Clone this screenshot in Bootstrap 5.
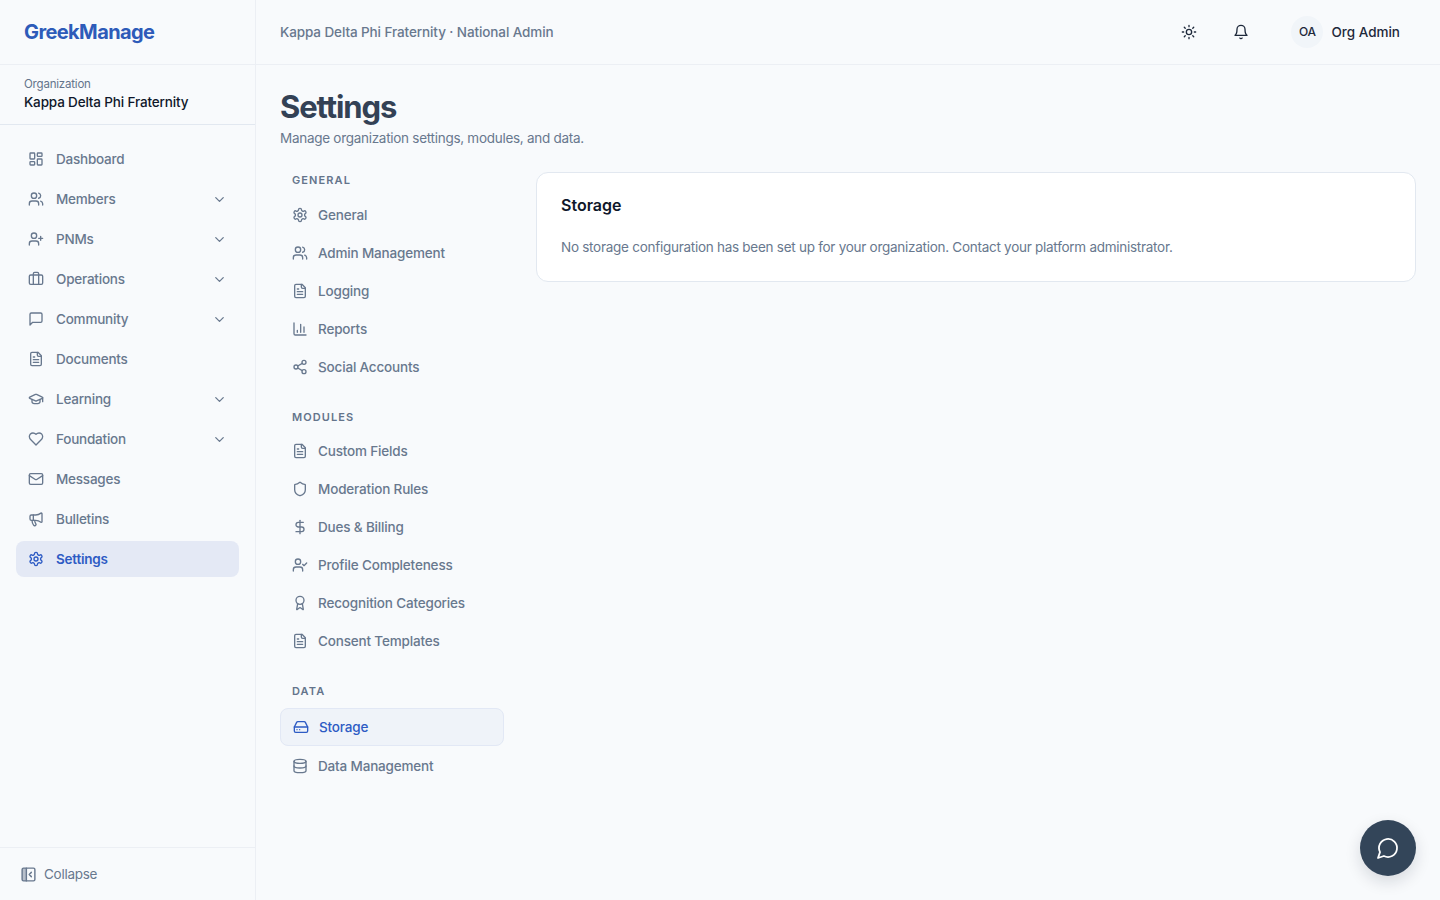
<!DOCTYPE html>
<html lang="en">
<head>
<meta charset="utf-8">
<title>Settings</title>
<link href="https://cdn.jsdelivr.net/npm/bootstrap@5.3.0/dist/css/bootstrap.min.css" rel="stylesheet">
<style>
body{font-family:"Inter","Liberation Sans",sans-serif;background:#f8fafc;color:#0f172a;font-size:13.5px;letter-spacing:-.28px;height:100vh;overflow:hidden}
svg.ico{width:16px;height:16px;fill:none;stroke:currentColor;stroke-width:2;stroke-linecap:round;stroke-linejoin:round;flex:none}
.gm-side{width:256px;height:900px;border-right:1px solid #eceff4;flex:none}
.gm-logo{height:65px;padding-left:24px;border-bottom:1px solid #eceff4;color:#2d5bb9;font-size:20px;font-weight:700;letter-spacing:-.6px}
.gm-org{height:60px;padding:12px 24px 0;border-bottom:1px solid #e2e8f0}
.gm-org-l{font-size:11.5px;line-height:15px;color:#64748b;letter-spacing:-.2px}
.gm-org-n{line-height:20px;font-weight:500;letter-spacing:-.16px}
.gm-nav{padding:16px 16px 0;gap:4px}
.gm-nav a{height:36px;padding:0 12px;gap:12px;color:#68788e;font-weight:500;text-decoration:none;border-radius:8px;letter-spacing:-.22px}
.gm-nav a .gm-chev{margin-left:auto;margin-right:.5px;width:15px;height:15px}
.gm-nav a.on{background:#e4e9f5;color:#2d5bc4;font-weight:600}
.gm-foot{border-top:1px solid #eceff4;height:53px;padding-left:20px;gap:7px;color:#68788e}
.gm-foot svg.ico{width:17px;height:17px}
.gm-top{height:65px;border-bottom:1px solid #eceff4;padding:0 40px 0 24px;color:#68788e;font-weight:500;letter-spacing:-.1px}
.gm-tool{width:52px;color:#1e293b}
.gm-ava{width:32px;height:32px;border-radius:50%;background:#f1f5f9;color:#1e293b;font-size:12px;font-weight:500;letter-spacing:-.2px}
.gm-user{color:#1e293b;gap:8px;margin-left:24px;letter-spacing:0}
.gm-main{padding:24px}
.gm-h1{font-size:31px;line-height:36px;font-weight:700;color:#334155;letter-spacing:-1.1px;margin:0}
.gm-sub{color:#68788e;line-height:20px;margin:3px 0 24px}
.gm-sn{width:224px;flex:none;margin-right:32px}
.gm-sh{font-size:11px;line-height:16px;font-weight:600;letter-spacing:1.1px;color:#64748b;padding-left:12px;margin-bottom:8px}
.gm-sh.next{margin-top:23px;margin-bottom:7px}
.gm-sh.last{margin-top:23px;margin-bottom:9px}
.gm-sn a{height:38px;padding:0 12px;gap:10px;color:#68788e;font-weight:500;text-decoration:none;border-radius:8px;letter-spacing:-.17px}
.gm-sn a.on{background:#eff3f9;border:1px solid #e2e8f5;color:#2d5bc4;margin-bottom:1px}
.gm-card{height:110px;background:#fff;border:1px solid #e2e8f0;border-radius:12px;padding:22px 24px;flex:1}
.gm-ct{font-size:16px;line-height:20px;font-weight:600;color:#0f172a;margin:0 0 22px;letter-spacing:0}
.gm-cp{color:#68788e;line-height:20px;margin:0;letter-spacing:-.27px}
.gm-chat{position:fixed;right:24px;bottom:24px;width:56px;height:56px;border-radius:50%;background:#334559;color:#fff;border:0;box-shadow:0 6px 16px rgba(15,23,42,.14)}
.gm-chat svg.ico{width:24px;height:24px;stroke-width:1.8}
</style>
</head>
<body>
<svg width="0" height="0" class="position-absolute">
<symbol id="i-dash" viewBox="0 0 24 24"><rect x="3" y="3" width="7" height="9" rx="1"/><rect x="14" y="3" width="7" height="5" rx="1"/><rect x="14" y="12" width="7" height="9" rx="1"/><rect x="3" y="16" width="7" height="5" rx="1"/></symbol>
<symbol id="i-users" viewBox="0 0 24 24"><path d="M16 21v-2a4 4 0 0 0-4-4H6a4 4 0 0 0-4 4v2"/><circle cx="9" cy="7" r="4"/><path d="M22 21v-2a4 4 0 0 0-3-3.87"/><path d="M16 3.13a4 4 0 0 1 0 7.75"/></symbol>
<symbol id="i-uplus" viewBox="0 0 24 24"><path d="M16 21v-2a4 4 0 0 0-4-4H6a4 4 0 0 0-4 4v2"/><circle cx="9" cy="7" r="4"/><path d="M19 8v6M22 11h-6"/></symbol>
<symbol id="i-brief" viewBox="0 0 24 24"><path d="M16 20V4a2 2 0 0 0-2-2h-4a2 2 0 0 0-2 2v16"/><rect x="2" y="6" width="20" height="14" rx="2"/></symbol>
<symbol id="i-msg" viewBox="0 0 24 24"><path d="M21 15a2 2 0 0 1-2 2H7l-4 4V5a2 2 0 0 1 2-2h14a2 2 0 0 1 2 2z"/></symbol>
<symbol id="i-file" viewBox="0 0 24 24"><path d="M15 2H6a2 2 0 0 0-2 2v16a2 2 0 0 0 2 2h12a2 2 0 0 0 2-2V7Z"/><path d="M14 2v4a2 2 0 0 0 2 2h4"/><path d="M10 9H8M16 13H8M16 17H8"/></symbol>
<symbol id="i-cap" viewBox="0 0 24 24"><path d="M21.42 10.922a1 1 0 0 0-.019-1.838L12.83 5.18a2 2 0 0 0-1.66 0L2.6 9.08a1 1 0 0 0 0 1.832l8.57 3.908a2 2 0 0 0 1.66 0z"/><path d="M22 10v6"/><path d="M6 12.5V16a6 3 0 0 0 12 0v-3.5"/></symbol>
<symbol id="i-heart" viewBox="0 0 24 24"><path d="M19 14c1.49-1.46 3-3.21 3-5.5A5.5 5.5 0 0 0 16.5 3c-1.76 0-3 .5-4.5 2-1.5-1.5-2.74-2-4.5-2A5.5 5.5 0 0 0 2 8.5c0 2.3 1.5 4.05 3 5.5l7 7Z"/></symbol>
<symbol id="i-mail" viewBox="0 0 24 24"><rect x="2" y="4" width="20" height="16" rx="2"/><path d="m22 7-8.97 5.7a1.94 1.94 0 0 1-2.06 0L2 7"/></symbol>
<symbol id="i-mega" viewBox="0 0 24 24"><path d="M11 6a13 13 0 0 0 8.4-2.8A1 1 0 0 1 21 4v12a1 1 0 0 1-1.6.8A13 13 0 0 0 11 14H5a2 2 0 0 1-2-2V8a2 2 0 0 1 2-2z"/><path d="M6 14a12 12 0 0 0 2.4 7.2 2 2 0 0 0 3.2-2.4A8 8 0 0 1 10 14"/><path d="M8 6v8"/></symbol>
<symbol id="i-gear" viewBox="0 0 24 24"><path d="M12.22 2h-.44a2 2 0 0 0-2 2v.18a2 2 0 0 1-1 1.73l-.43.25a2 2 0 0 1-2 0l-.15-.08a2 2 0 0 0-2.73.73l-.22.38a2 2 0 0 0 .73 2.73l.15.1a2 2 0 0 1 1 1.72v.51a2 2 0 0 1-1 1.74l-.15.09a2 2 0 0 0-.73 2.73l.22.38a2 2 0 0 0 2.73.73l.15-.08a2 2 0 0 1 2 0l.43.25a2 2 0 0 1 1 1.73V20a2 2 0 0 0 2 2h.44a2 2 0 0 0 2-2v-.18a2 2 0 0 1 1-1.73l.43-.25a2 2 0 0 1 2 0l.15.08a2 2 0 0 0 2.73-.73l.22-.39a2 2 0 0 0-.73-2.73l-.15-.08a2 2 0 0 1-1-1.74v-.5a2 2 0 0 1 1-1.74l.15-.09a2 2 0 0 0 .73-2.73l-.22-.38a2 2 0 0 0-2.73-.73l-.15.08a2 2 0 0 1-2 0l-.43-.25a2 2 0 0 1-1-1.73V4a2 2 0 0 0-2-2z"/><circle cx="12" cy="12" r="3"/></symbol>
<symbol id="i-chev" viewBox="0 0 24 24"><path d="m6 9 6 6 6-6"/></symbol>
<symbol id="i-panel" viewBox="0 0 24 24"><path d="M3 3h6v18H3z" fill="currentColor" stroke="none" opacity=".45"/><rect x="3" y="3" width="18" height="18" rx="2"/><path d="M9 3v18"/><path d="m16 15-3-3 3-3"/></symbol>
<symbol id="i-sun" viewBox="0 0 24 24"><circle cx="12" cy="12" r="4"/><path d="M12 2v2M12 20v2M4.93 4.93l1.41 1.41M17.66 17.66l1.41 1.41M2 12h2M20 12h2M6.34 17.66l-1.41 1.41M19.07 4.93l-1.41 1.41"/></symbol>
<symbol id="i-bell" viewBox="0 0 24 24"><path d="M6 8a6 6 0 0 1 12 0c0 7 3 9 3 9H3s3-2 3-9"/><path d="M10.3 21a1.94 1.94 0 0 0 3.4 0"/></symbol>
<symbol id="i-chart" viewBox="0 0 24 24"><path d="M3 3v16a2 2 0 0 0 2 2h16"/><path d="M18 17V9M13 17V5M8 17v-3"/></symbol>
<symbol id="i-share" viewBox="0 0 24 24"><circle cx="18" cy="5" r="3"/><circle cx="6" cy="12" r="3"/><circle cx="18" cy="19" r="3"/><path d="M8.59 13.51l6.83 3.98M15.41 6.51l-6.82 3.98"/></symbol>
<symbol id="i-shield" viewBox="0 0 24 24"><path d="M20 13c0 5-3.5 7.5-7.66 8.95a1 1 0 0 1-.67-.01C7.5 20.5 4 18 4 13V6a1 1 0 0 1 1-1c2 0 4.5-1.2 6.24-2.72a1.17 1.17 0 0 1 1.52 0C14.51 3.81 17 5 19 5a1 1 0 0 1 1 1z"/></symbol>
<symbol id="i-dollar" viewBox="0 0 24 24"><path d="M12 2v20"/><path d="M17 5H9.5a3.5 3.5 0 0 0 0 7h5a3.5 3.5 0 0 1 0 7H6"/></symbol>
<symbol id="i-ucheck" viewBox="0 0 24 24"><path d="M16 21v-2a4 4 0 0 0-4-4H6a4 4 0 0 0-4 4v2"/><circle cx="9" cy="7" r="4"/><path d="m16 11 2 2 4-4"/></symbol>
<symbol id="i-award" viewBox="0 0 24 24"><path d="m15.477 12.89 1.515 8.526a.5.5 0 0 1-.81.47l-3.58-2.687a1 1 0 0 0-1.197 0l-3.586 2.686a.5.5 0 0 1-.81-.469l1.514-8.526"/><circle cx="12" cy="8" r="6"/></symbol>
<symbol id="i-drive" viewBox="0 0 24 24"><path d="M22 12H2"/><path d="M5.45 5.11 2 12v6a2 2 0 0 0 2 2h16a2 2 0 0 0 2-2v-6l-3.45-6.89A2 2 0 0 0 16.76 4H7.24a2 2 0 0 0-1.79 1.11z"/><path d="M6 16h.01M10 16h.01"/></symbol>
<symbol id="i-db" viewBox="0 0 24 24"><ellipse cx="12" cy="5" rx="9" ry="3"/><path d="M3 5V19A9 3 0 0 0 21 19V5"/><path d="M3 12A9 3 0 0 0 21 12"/></symbol>
<symbol id="i-circle" viewBox="0 0 24 24"><path d="M7.9 20A9 9 0 1 0 4 16.1L2 22Z"/></symbol>
</svg>

<div class="d-flex">
  <aside class="gm-side d-flex flex-column">
    <div class="gm-logo d-flex align-items-center">GreekManage</div>
    <div class="gm-org">
      <div class="gm-org-l">Organization</div>
      <div class="gm-org-n">Kappa Delta Phi Fraternity</div>
    </div>
    <nav class="gm-nav d-flex flex-column flex-grow-1">
      <a href="#" class="d-flex align-items-center"><svg class="ico"><use href="#i-dash"/></svg>Dashboard</a>
      <a href="#" class="d-flex align-items-center"><svg class="ico"><use href="#i-users"/></svg>Members<svg class="ico gm-chev"><use href="#i-chev"/></svg></a>
      <a href="#" class="d-flex align-items-center"><svg class="ico"><use href="#i-uplus"/></svg>PNMs<svg class="ico gm-chev"><use href="#i-chev"/></svg></a>
      <a href="#" class="d-flex align-items-center"><svg class="ico"><use href="#i-brief"/></svg>Operations<svg class="ico gm-chev"><use href="#i-chev"/></svg></a>
      <a href="#" class="d-flex align-items-center"><svg class="ico"><use href="#i-msg"/></svg>Community<svg class="ico gm-chev"><use href="#i-chev"/></svg></a>
      <a href="#" class="d-flex align-items-center"><svg class="ico"><use href="#i-file"/></svg>Documents</a>
      <a href="#" class="d-flex align-items-center"><svg class="ico"><use href="#i-cap"/></svg>Learning<svg class="ico gm-chev"><use href="#i-chev"/></svg></a>
      <a href="#" class="d-flex align-items-center"><svg class="ico"><use href="#i-heart"/></svg>Foundation<svg class="ico gm-chev"><use href="#i-chev"/></svg></a>
      <a href="#" class="d-flex align-items-center"><svg class="ico"><use href="#i-mail"/></svg>Messages</a>
      <a href="#" class="d-flex align-items-center"><svg class="ico"><use href="#i-mega"/></svg>Bulletins</a>
      <a href="#" class="on d-flex align-items-center"><svg class="ico"><use href="#i-gear"/></svg>Settings</a>
    </nav>
    <div class="gm-foot d-flex align-items-center"><svg class="ico"><use href="#i-panel"/></svg>Collapse</div>
  </aside>
  <div class="flex-grow-1">
    <header class="gm-top d-flex align-items-center">
      <span>Kappa Delta Phi Fraternity · National Admin</span>
      <div class="ms-auto d-flex align-items-center">
        <span class="gm-tool d-flex justify-content-center"><svg class="ico"><use href="#i-sun"/></svg></span>
        <span class="gm-tool d-flex justify-content-center"><svg class="ico"><use href="#i-bell"/></svg></span>
        <span class="gm-user d-flex align-items-center"><span class="gm-ava d-flex align-items-center justify-content-center">OA</span>Org Admin</span>
      </div>
    </header>
    <main class="gm-main">
      <h1 class="gm-h1">Settings</h1>
      <p class="gm-sub">Manage organization settings, modules, and data.</p>
      <div class="d-flex align-items-start">
        <nav class="gm-sn d-flex flex-column">
          <div class="gm-sh">GENERAL</div>
          <a href="#" class="d-flex align-items-center"><svg class="ico"><use href="#i-gear"/></svg>General</a>
          <a href="#" class="d-flex align-items-center"><svg class="ico"><use href="#i-users"/></svg>Admin Management</a>
          <a href="#" class="d-flex align-items-center"><svg class="ico"><use href="#i-file"/></svg>Logging</a>
          <a href="#" class="d-flex align-items-center"><svg class="ico"><use href="#i-chart"/></svg>Reports</a>
          <a href="#" class="d-flex align-items-center"><svg class="ico"><use href="#i-share"/></svg>Social Accounts</a>
          <div class="gm-sh next">MODULES</div>
          <a href="#" class="d-flex align-items-center"><svg class="ico"><use href="#i-file"/></svg>Custom Fields</a>
          <a href="#" class="d-flex align-items-center"><svg class="ico"><use href="#i-shield"/></svg>Moderation Rules</a>
          <a href="#" class="d-flex align-items-center"><svg class="ico"><use href="#i-dollar"/></svg>Dues &amp; Billing</a>
          <a href="#" class="d-flex align-items-center"><svg class="ico"><use href="#i-ucheck"/></svg>Profile Completeness</a>
          <a href="#" class="d-flex align-items-center"><svg class="ico"><use href="#i-award"/></svg>Recognition Categories</a>
          <a href="#" class="d-flex align-items-center"><svg class="ico"><use href="#i-file"/></svg>Consent Templates</a>
          <div class="gm-sh last">DATA</div>
          <a href="#" class="on d-flex align-items-center"><svg class="ico"><use href="#i-drive"/></svg>Storage</a>
          <a href="#" class="d-flex align-items-center"><svg class="ico"><use href="#i-db"/></svg>Data Management</a>
        </nav>
        <section class="gm-card">
          <h2 class="gm-ct">Storage</h2>
          <p class="gm-cp">No storage configuration has been set up for your organization. Contact your platform administrator.</p>
        </section>
      </div>
    </main>
  </div>
</div>
<button class="gm-chat d-flex align-items-center justify-content-center" type="button" aria-label="Chat"><svg class="ico"><use href="#i-circle"/></svg></button>
<script src="https://cdn.jsdelivr.net/npm/bootstrap@5.3.0/dist/js/bootstrap.bundle.min.js"></script>
</body>
</html>
